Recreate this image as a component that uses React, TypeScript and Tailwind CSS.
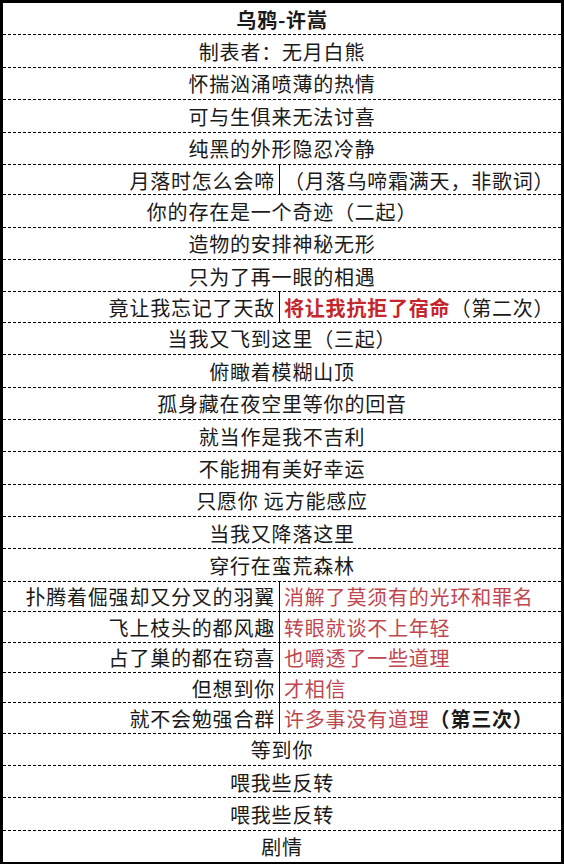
type Seg = { text: string; tone?: 'red' | 'redBold' | 'bold' };

type Row =
  | { kind: 'full'; text: string; bold?: boolean }
  | { kind: 'split'; left: string; right: Seg[] };

const rows: Row[] = [
  { kind: 'full', text: '乌鸦-许嵩', bold: true },
  { kind: 'full', text: '制表者：无月白熊' },
  { kind: 'full', text: '怀揣汹涌喷薄的热情' },
  { kind: 'full', text: '可与生俱来无法讨喜' },
  { kind: 'full', text: '纯黑的外形隐忍冷静' },
  { kind: 'split', left: '月落时怎么会啼', right: [{ text: '（月落乌啼霜满天，非歌词）' }] },
  { kind: 'full', text: '你的存在是一个奇迹（二起）' },
  { kind: 'full', text: '造物的安排神秘无形' },
  { kind: 'full', text: '只为了再一眼的相遇' },
  {
    kind: 'split',
    left: '竟让我忘记了天敌',
    right: [{ text: '将让我抗拒了宿命', tone: 'redBold' }, { text: '（第二次）' }],
  },
  { kind: 'full', text: '当我又飞到这里（三起）' },
  { kind: 'full', text: '俯瞰着模糊山顶' },
  { kind: 'full', text: '孤身藏在夜空里等你的回音' },
  { kind: 'full', text: '就当作是我不吉利' },
  { kind: 'full', text: '不能拥有美好幸运' },
  { kind: 'full', text: '只愿你 远方能感应' },
  { kind: 'full', text: '当我又降落这里' },
  { kind: 'full', text: '穿行在蛮荒森林' },
  { kind: 'split', left: '扑腾着倔强却又分叉的羽翼', right: [{ text: '消解了莫须有的光环和罪名', tone: 'red' }] },
  { kind: 'split', left: '飞上枝头的都风趣', right: [{ text: '转眼就谈不上年轻', tone: 'red' }] },
  { kind: 'split', left: '占了巢的都在窃喜', right: [{ text: '也嚼透了一些道理', tone: 'red' }] },
  { kind: 'split', left: '但想到你', right: [{ text: '才相信', tone: 'red' }] },
  {
    kind: 'split',
    left: '就不会勉强合群',
    right: [{ text: '许多事没有道理', tone: 'red' }, { text: '（第三次）', tone: 'bold' }],
  },
  { kind: 'full', text: '等到你' },
  { kind: 'full', text: '喂我些反转' },
  { kind: 'full', text: '喂我些反转' },
  { kind: 'full', text: '剧情' },
];

const toneClass = (tone?: Seg['tone']) => {
  if (tone === 'red') return 'text-[#c0474f]';
  if (tone === 'redBold') return 'text-[#c4262c] font-bold';
  if (tone === 'bold') return 'font-bold';
  return '';
};

export default function App() {
  return (
    <div
      className="h-[864px] w-[564px] flex flex-col bg-white border-x-[3px] border-t-[3px] border-b-2 border-black text-[20px] tracking-[0.8px] text-[#1a1a1a] leading-none"
      style={{ fontFamily: '"SimSun", "Noto Sans CJK SC", sans-serif' }}
    >
      {rows.map((row, i) => {
        const last = i === rows.length - 1;
        const lineClass = last ? '' : 'border-b border-dashed border-black';
        if (row.kind === 'full') {
          return (
            <div
              key={i}
              className={`flex-1 min-h-0 flex items-center justify-center pt-[2px] ${lineClass} ${row.bold ? 'font-bold' : ''}`}
            >
              {row.text}
            </div>
          );
        }
        return (
          <div key={i} className={`flex-1 min-h-0 grid grid-cols-[277px_1fr] ${lineClass}`}>
            <div className="flex items-center justify-end pr-[4px] pt-[2px] border-r border-black">{row.left}</div>
            <div className="flex items-center pl-[4px] pt-[2px] whitespace-nowrap">
              {row.right.map((seg, j) => (
                <span key={j} className={toneClass(seg.tone)}>
                  {seg.text}
                </span>
              ))}
            </div>
          </div>
        );
      })}
    </div>
  );
}
